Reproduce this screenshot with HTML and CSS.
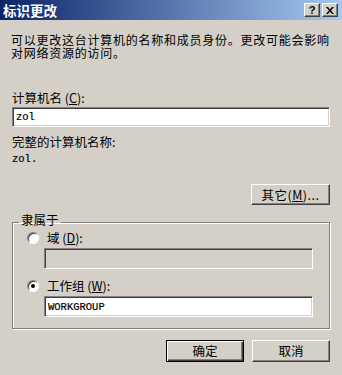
FILE: index.html
```html
<!DOCTYPE html>
<html>
<head>
<meta charset="utf-8">
<link rel="stylesheet" href="styles.css">
</head>
<body>
<div class="window">
  <div class="titlebar">
    <span class="title">标识更改</span>
    <div class="tbtns">
      <span class="tbtn help">?</span>
      <span class="tbtn close"><svg width="8" height="7" viewBox="0 0 8 7"><path d="M0 0h2l2 2.5 2-2.5h2l-3 3.5 3 3.5h-2l-2-2.5-2 2.5h-2l3-3.5z" fill="#000"/></svg></span>
    </div>
  </div>
  <div class="content">
    <p class="desc">可以更改这台计算机的名称和成员身份。更改可能会影响<br>对网络资源的访问。</p>
    <div class="label lbl-name">计算机名 (<u>C</u>):</div>
    <div class="input mono"><span>zol</span></div>
    <div class="label lbl-full">完整的计算机名称:</div>
    <div class="mono fullname">zol.</div>
    <div class="row-right"><button class="btn other"><span>其它(<u>M</u>)...</span></button></div>
    <fieldset class="group">
      <legend class="legend">隶属于</legend>
      <div class="radio-row first"><span class="radio"></span><span class="rlabel">域 (<u>D</u>):</span></div>
      <div class="input field disabled"></div>
      <div class="radio-row second"><span class="radio checked"></span><span class="rlabel">工作组 (<u>W</u>):</span></div>
      <div class="input field mono"><span>WORKGROUP</span></div>
    </fieldset>
    <div class="actions">
      <button class="btn default">确定</button>
      <button class="btn">取消</button>
    </div>
  </div>
</div>
</body>
</html>
```
FILE: styles.css
```css
html, body {
  margin: 0;
  padding: 0;
  background: #d4d0c8;
}
.window {
  width: 342px;
  height: 375px;
  background: #d4d0c8;
  font-family: "Noto Sans CJK SC", "Liberation Sans", sans-serif;
  font-size: 12.5px;
  color: #000;
  overflow: hidden;
}
.titlebar {
  height: 20px;
  display: flex;
  align-items: center;
  justify-content: space-between;
  background: linear-gradient(to right, #0a246a, #a6caf0);
  padding: 0 4px 0 3px;
}
.title {
  color: #fff;
  font-weight: bold;
  font-size: 13.5px;
  line-height: 20px;
}
.tbtns {
  display: flex;
  gap: 2px;
}
.tbtn {
  width: 16px;
  height: 14px;
  box-sizing: border-box;
  background: #d4d0c8;
  border: 1px solid;
  border-color: #fff #404040 #404040 #fff;
  box-shadow: inset -1px -1px #808080;
  display: flex;
  align-items: center;
  justify-content: center;
  font-family: "Liberation Sans", sans-serif;
  font-weight: bold;
  font-size: 11px;
  line-height: 1;
}
.content {
  padding: 0 12px;
}
.desc {
  margin: 13px 0 0 -1px;
  font-size: 12px;
  line-height: 13px;
  letter-spacing: 0.75px;
}
.label {
  line-height: 12px;
}
.lbl-name { margin-top: 33px; }
.lbl-full { margin-top: 9px; }
.input {
  box-sizing: border-box;
  height: 20px;
  background: #fff;
  border: 1px solid;
  border-color: #808080 #fff #fff #808080;
  box-shadow: inset 1px 1px #404040, inset -1px -1px #d4d0c8;
  padding: 0 3px;
  display: flex;
  align-items: center;
  margin-top: 3px;
}
.mono {
  font-family: "Liberation Mono", "DejaVu Sans Mono", monospace;
  font-size: 10.5px;
  color: #000;
  -webkit-text-stroke: 0.2px #000;
}
.fullname {
  margin-top: 5px;
  line-height: 12px;
}
.row-right {
  display: flex;
  justify-content: flex-end;
  margin-top: 19px;
}
.btn {
  box-sizing: border-box;
  width: 79px;
  height: 21px;
  padding: 0;
  margin: 0;
  background: #d4d0c8;
  border: 1px solid;
  border-color: #fff #404040 #404040 #fff;
  box-shadow: inset -1px -1px #808080;
  font-family: "Noto Sans CJK SC", "Liberation Sans", sans-serif;
  font-size: 12.5px;
  color: #000;
  line-height: 12px;
  display: flex;
  align-items: center;
  justify-content: center;
}
.other { letter-spacing: 0.5px; }
.group {
  margin: 9px 0 0 0;
  padding: 2px 16px 11px 31px;
  border: 1px solid #808080;
  box-shadow: inset 1px 1px #fff, 1px 1px #fff;
  min-width: 0;
}
.legend {
  padding: 0 2px 4px;
  margin-left: -25px;
  line-height: 12px;
}
.radio-row {
  display: flex;
  align-items: center;
  gap: 8px;
  line-height: 12px;
  margin-left: -17px;
}
.radio-row.second { margin-top: 11px; }
.radio {
  width: 12px;
  height: 12px;
  box-sizing: border-box;
  border-radius: 50%;
  background: #fff;
  border: 1px solid;
  border-color: #808080 #fff #fff #808080;
  box-shadow: inset 1px 1px #404040;
  display: flex;
  align-items: center;
  justify-content: center;
}
.radio.checked::after {
  content: "";
  width: 4px;
  height: 4px;
  border-radius: 50%;
  background: #000;
}
.field {
  height: 21px;
  margin-top: 4px;
}
.field.disabled {
  background: #d4d0c8;
}
.actions {
  display: flex;
  justify-content: flex-end;
  gap: 8px;
  margin-top: 11px;
}
.actions .btn {
  width: 78px;
  height: 22px;
}
.btn.default {
  border: 1px solid #000;
  box-shadow: inset 1px 1px #fff, inset -1px -1px #404040, inset -2px -2px #808080;
}
```
